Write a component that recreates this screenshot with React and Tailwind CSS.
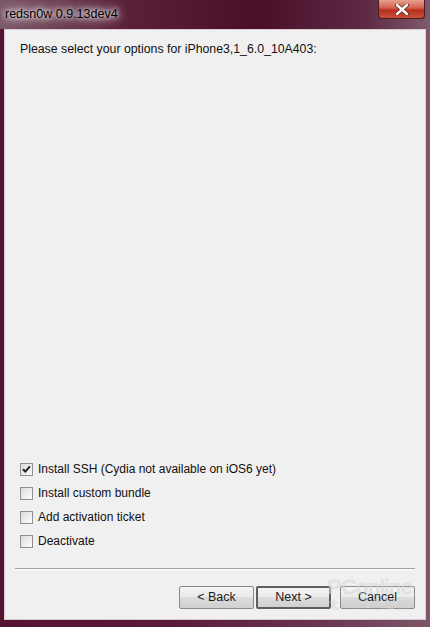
import { useState } from 'react'

const OPTIONS = [
  { key: 'ssh', label: 'Install SSH (Cydia not available on iOS6 yet)', checked: true },
  { key: 'bundle', label: 'Install custom bundle', checked: false },
  { key: 'ticket', label: 'Add activation ticket', checked: false },
  { key: 'deactivate', label: 'Deactivate', checked: false },
]

function CheckBox({ checked }) {
  return (
    <span className="w-[13px] h-[13px] shrink-0 border border-[#8e8f8f] bg-[linear-gradient(135deg,#dcdcdc,#fbfbfb)] flex items-center justify-center">
      {checked && (
        <svg width="9" height="9" viewBox="0 0 9 9">
          <path d="M1 4.2 L3.3 6.6 L8 1.4" fill="none" stroke="#1b1b1b" strokeWidth="2" />
        </svg>
      )}
    </span>
  )
}

function Button({ children, primary }) {
  return (
    <button
      className={`w-[75px] h-[23px] rounded-[2px] text-[12.5px] text-[#1a1a1a] bg-[linear-gradient(#f4f4f4,#ebebeb_45%,#dcdcdc_50%,#d0d0d0)] ${
        primary ? 'border-2 border-[#5f5f5f]' : 'border border-[#8a8a8a]'
      }`}
    >
      {children}
    </button>
  )
}

export default function App() {
  const [opts, setOpts] = useState(OPTIONS)

  return (
    <div className="relative w-[430px] h-[627px] flex flex-col bg-[linear-gradient(90deg,#561232_0%,#5a1a3a_40%,#6a3550_75%,#7c5868_100%)] font-['Liberation_Sans',Arial,sans-serif] overflow-hidden">
      {/* title bar */}
      <div className="h-[29px] shrink-0 flex items-start justify-between bg-[linear-gradient(90deg,#7c5868_0%,#5a2038_30%,#4a0f28_60%,#5e2a44_85%,#7d5a6c_100%)]">
        <span className="mt-[7px] ml-[5px] text-[12.5px] leading-[14px] text-black [text-shadow:0_0_8px_#fff,0_0_14px_#fff,0_0_4px_#fff]">
          redsn0w 0.9.13dev4
        </span>
        <div className="mr-[5px] w-[47px] h-[19px] rounded-b-[4px] border border-t-0 border-[#4d1a1d] bg-[linear-gradient(#e6a090,#d0604c_45%,#b8301c_55%,#c8503a)] flex items-center justify-center">
          <svg width="14" height="11" viewBox="0 0 14 11">
            <path d="M2 1 L12 10 M12 1 L2 10" stroke="#5a2020" strokeWidth="4" strokeLinecap="round" />
            <path d="M2 1 L12 10 M12 1 L2 10" stroke="#ffffff" strokeWidth="2.4" strokeLinecap="round" />
          </svg>
        </div>
      </div>

      {/* client area */}
      <div className="mx-[4px] h-[591px] shrink-0 border border-[#d8ccd2] bg-[#f0f0f0] flex flex-col text-[12px] text-[#111]">
        <p className="pt-[12px] pl-[15px] leading-[14px] text-[12.3px]">
          Please select your options for iPhone3,1_6.0_10A403:
        </p>

        <div className="flex-1" />

        <div className="flex flex-col pl-[15px]">
          {opts.map((o, i) => (
            <label
              key={o.key}
              className="h-[24px] flex items-center gap-[5px]"
              onClick={() =>
                setOpts((p) => p.map((x, j) => (j === i ? { ...x, checked: !x.checked } : x)))
              }
            >
              <CheckBox checked={o.checked} />
              <span>{o.label}</span>
            </label>
          ))}
        </div>

        <div className="mt-[15px] mx-[10px] h-[2px] border-t border-[#a0a0a0] border-b border-b-white" />

        <div className="mt-[16px] mb-[10px] pr-[10px] flex justify-end">
          <Button>&lt; Back</Button>
          <span className="w-[2px]" />
          <Button primary>Next &gt;</Button>
          <span className="w-[9px]" />
          <Button>Cancel</Button>
        </div>
      </div>

      {/* watermark */}
      <div className="absolute left-[322px] top-[576px] w-[96px] flex flex-col items-center pointer-events-none opacity-60">
        <span className="text-[21px] leading-[22px] text-[#dcdcdc] [text-shadow:0_0_1px_#aaa] font-['Liberation_Sans',sans-serif]">
          PConline
        </span>
        <span className="text-[11px] leading-[13px] tracking-[3px] text-[#cfcfcf] font-['Noto_Sans_CJK_SC',sans-serif]">
          太平洋电脑网
        </span>
      </div>
    </div>
  )
}
